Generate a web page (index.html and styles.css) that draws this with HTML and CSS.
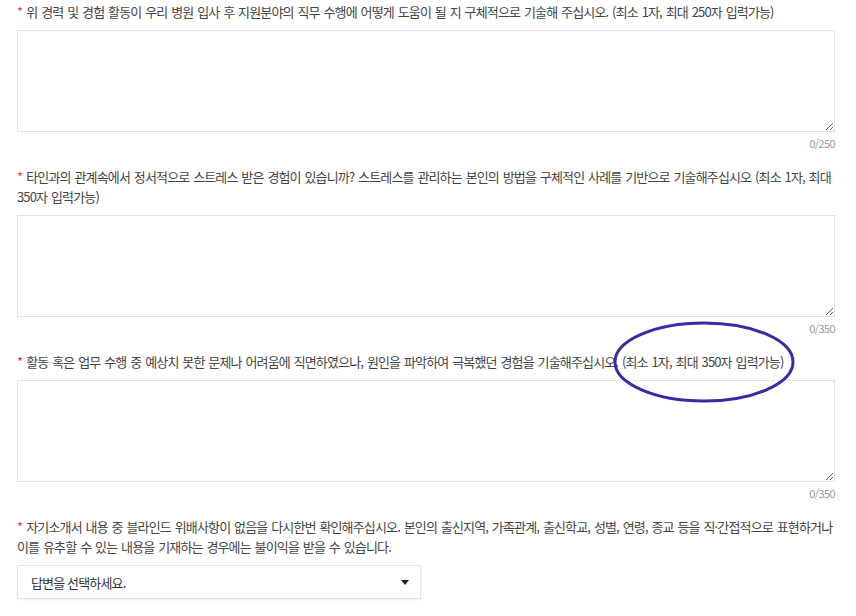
FILE: index.html
```html
<!DOCTYPE html>
<html lang="ko">
<head>
<meta charset="utf-8">
<title>자기소개서</title>
<link rel="stylesheet" href="styles.css">
</head>
<body>
<div class="form">
  <div class="field">
    <p class="label req">위 경력 및 경험 활동이 우리 병원 입사 후 지원분야의 직무 수행에 어떻게 도움이 될 지 구체적으로 기술해 주십시오. (최소 1자, 최대 250자 입력가능)</p>
    <textarea class="answer"></textarea>
    <div class="count">0/250</div>
  </div>
  <div class="field">
    <p class="label req">타인과의 관계속에서 정서적으로 스트레스 받은 경험이 있습니까? 스트레스를 관리하는 본인의 방법을 구체적인 사례를 기반으로 기술해주십시오 (최소 1자, 최대 350자 입력가능)</p>
    <textarea class="answer"></textarea>
    <div class="count">0/350</div>
  </div>
  <div class="field">
    <p class="label req">활동 혹은 업무 수행 중 예상치 못한 문제나 어려움에 직면하였으나, 원인을 파악하여 극복했던 경험을 기술해주십시오. (최소 1자, 최대 350자 입력가능)</p>
    <textarea class="answer"></textarea>
    <div class="count">0/350</div>
  </div>
  <div class="field">
    <p class="label req">자기소개서 내용 중 블라인드 위배사항이 없음을 다시한번 확인해주십시오. 본인의 출신지역, 가족관계, 출신학교, 성별, 연령, 종교 등을 직·간접적으로 표현하거나 이를 유추할 수 있는 내용을 기재하는 경우에는 불이익을 받을 수 있습니다.</p>
    <div class="select">
      <span class="select-text">답변을 선택하세요.</span>
      <svg class="caret" width="8" height="5" viewBox="0 0 8 5"><path d="M0 0H8L4 5Z" fill="#222"/></svg>
    </div>
  </div>
</div>
<svg class="mark" width="190" height="90" viewBox="0 0 190 90"><ellipse cx="95" cy="45" rx="89" ry="39" fill="none" stroke="#3a2aa8" stroke-width="3"/></svg>
</body>
</html>
```
FILE: styles.css
```css
html, body {
  margin: 0;
  padding: 0;
  background: #fff;
}
body {
  font-family: "Noto Sans CJK KR", "Noto Sans", sans-serif;
  font-size: 13px;
  color: #444;
  position: relative;
  width: 856px;
  height: 616px;
  overflow: hidden;
}
.form {
  padding: 2px 21px 0 17px;
  display: flex;
  flex-direction: column;
}
.field {
  display: flex;
  flex-direction: column;
  margin-bottom: 16px;
}
.label {
  margin: 0 0 8px 0;
  line-height: 20px;
  letter-spacing: -0.85px;
  word-spacing: 1px;
}
.req::before {
  content: "*";
  color: #e8393e;
  margin-right: 4px;
}
.answer {
  display: block;
  box-sizing: border-box;
  width: 100%;
  height: 102px;
  border: 1px solid #e2e2e2;
  border-radius: 0;
  margin: 0;
  padding: 8px;
  font: inherit;
  resize: vertical;
  background: #fff;
}
.count {
  margin-top: 3px;
  text-align: right;
  font-size: 11px;
  line-height: 16px;
  color: #9a9a9a;
  letter-spacing: -0.6px;
}
.select {
  box-sizing: border-box;
  width: 404px;
  height: 34px;
  border: 1px solid #e4e4e4;
  box-shadow: 0 1px 2px rgba(0,0,0,0.06);
  display: flex;
  align-items: center;
  justify-content: space-between;
  padding: 0 11px 0 13px;
  letter-spacing: -0.85px;
  color: #333;
}
.caret {
  display: block;
}
.mark {
  position: absolute;
  left: 609px;
  top: 317px;
}
```
